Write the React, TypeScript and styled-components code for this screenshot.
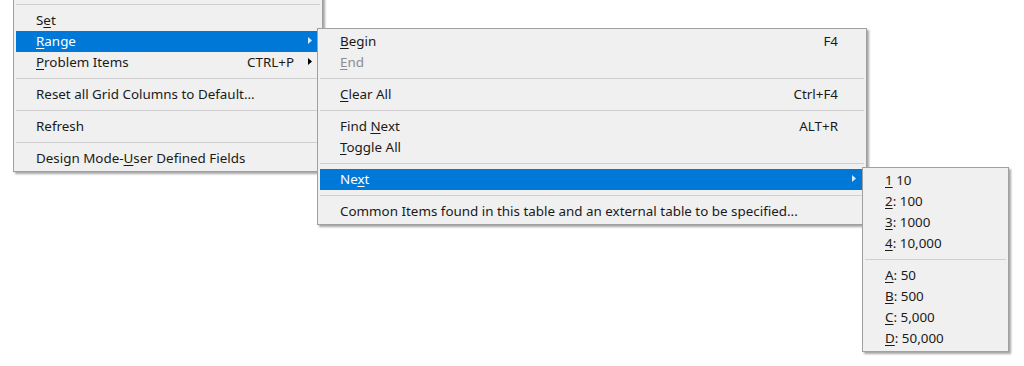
import React from "react";
import styled, { createGlobalStyle } from "styled-components";

const GlobalStyle = createGlobalStyle`
  html, body {
    margin: 0;
    padding: 0;
    background: #ffffff;
  }
  body {
    width: 1024px;
    height: 366px;
    overflow: hidden;
    font-family: "Noto Sans", "Open Sans", sans-serif;
    font-size: 13.4px;
    color: #000;
  }
`;

const Canvas = styled.div`
  position: relative;
  width: 1024px;
  height: 366px;
  overflow: hidden;
`;

const MenuBox = styled.div<{ $left: number; $top: number; $width: number }>`
  position: absolute;
  left: ${(p) => p.$left}px;
  top: ${(p) => p.$top}px;
  width: ${(p) => p.$width}px;
  box-sizing: border-box;
  background: #f0f0f0;
  border: 1px solid #a0a0a0;
  padding: 2px;
  box-shadow: 2px 2px 2px rgba(0, 0, 0, 0.35);
  display: flex;
  flex-direction: column;
`;

const Row = styled.div<{ $active?: boolean; $disabled?: boolean }>`
  height: 21px;
  box-sizing: border-box;
  display: flex;
  align-items: center;
  padding: 0 8px 2px 20px;
  background: ${(p) => (p.$active ? "#0078d7" : "transparent")};
  color: ${(p) => (p.$active ? "#ffffff" : p.$disabled ? "#8d8d8d" : "#1a1a1a")};
  white-space: nowrap;

  u {
    text-underline-offset: 2px;
  }
`;

const Label = styled.span`
  flex: 1;
`;

const Shortcut = styled.span`
  margin-right: 12px;
`;

const ArrowSlot = styled.span<{ $active?: boolean }>`
  width: 6px;
  display: flex;
  justify-content: flex-end;
  align-items: center;

  svg {
    fill: ${(p) => (p.$active ? "#d8e9fb" : "#000")};
  }
`;

const Separator = styled.div`
  height: 11px;
  display: flex;
  align-items: center;

  &::after {
    content: "";
    flex: 1;
    height: 1px;
    background: #cfcfcf;
  }
`;

function Arrow() {
  return (
    <svg width="4" height="7" viewBox="0 0 4 7">
      <path d="M0 0 L4 3.5 L0 7 Z" />
    </svg>
  );
}

type Item = {
  label: React.ReactNode;
  shortcut?: string;
  sub?: boolean;
  active?: boolean;
  disabled?: boolean;
};

type Entry = Item | "sep";

function Menu({ left, top, width, entries }: { left: number; top: number; width: number; entries: Entry[] }) {
  return (
    <MenuBox $left={left} $top={top} $width={width}>
      {entries.map((e, i) =>
        e === "sep" ? (
          <Separator key={i} />
        ) : (
          <Row key={i} $active={e.active} $disabled={e.disabled}>
            <Label>{e.label}</Label>
            {e.shortcut && <Shortcut>{e.shortcut}</Shortcut>}
            <ArrowSlot $active={e.active}>{e.sub && <Arrow />}</ArrowSlot>
          </Row>
        )
      )}
    </MenuBox>
  );
}

const mainMenu: Entry[] = [
  "sep",
  { label: <>S<u>e</u>t</> },
  { label: <><u>R</u>ange</>, sub: true, active: true },
  { label: <><u>P</u>roblem Items</>, shortcut: "CTRL+P", sub: true },
  "sep",
  { label: "Reset all Grid Columns to Default..." },
  "sep",
  { label: "Refresh" },
  "sep",
  { label: <>Design Mode-<u>U</u>ser Defined Fields</> },
];

const rangeMenu: Entry[] = [
  { label: <><u>B</u>egin</>, shortcut: "F4" },
  { label: <><u>E</u>nd</>, disabled: true },
  "sep",
  { label: <><u>C</u>lear All</>, shortcut: "Ctrl+F4" },
  "sep",
  { label: <>Find <u>N</u>ext</>, shortcut: "ALT+R" },
  { label: <><u>T</u>oggle All</> },
  "sep",
  { label: <>Ne<u>x</u>t</>, sub: true, active: true },
  "sep",
  { label: "Common Items found in this table and an external table to be specified..." },
];

const nextMenu: Entry[] = [
  { label: <><u>1</u> 10</> },
  { label: <><u>2</u>: 100</> },
  { label: <><u>3</u>: 1000</> },
  { label: <><u>4</u>: 10,000</> },
  "sep",
  { label: <><u>A</u>: 50</> },
  { label: <><u>B</u>: 500</> },
  { label: <><u>C</u>: 5,000</> },
  { label: <><u>D</u>: 50,000</> },
];

export default function App() {
  return (
    <>
      <GlobalStyle />
      <Canvas>
        <Menu left={13} top={-4} width={310} entries={mainMenu} />
        <Menu left={317} top={28} width={550} entries={rangeMenu} />
        <Menu left={862} top={167} width={147} entries={nextMenu} />
      </Canvas>
    </>
  );
}
